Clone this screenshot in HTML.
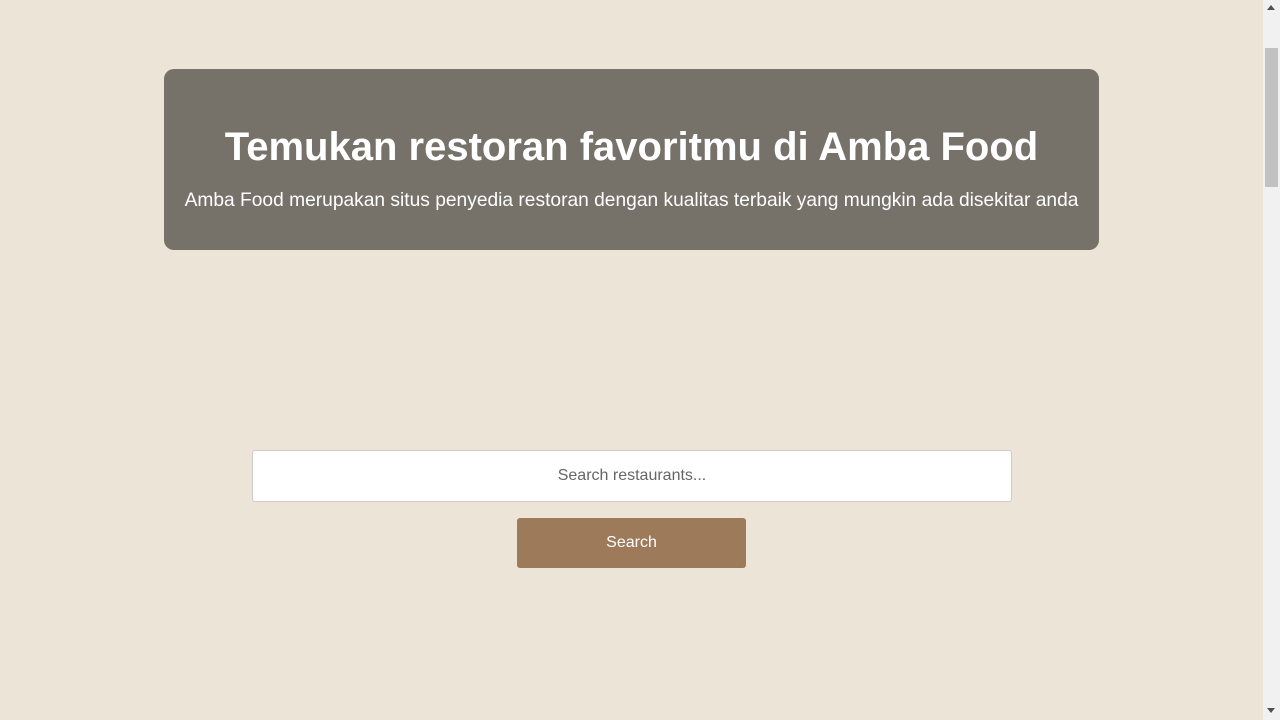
<!DOCTYPE html>
<html><head><style>
html,body{margin:0;padding:0;}
body{width:1280px;height:720px;background:#ece4d6;font-family:"Liberation Sans",Arial,sans-serif;position:relative;overflow:hidden;}
.hero{position:absolute;left:164px;top:69px;width:935px;height:181px;background:#767169;border-radius:10px;color:#fff;text-align:center;}
.hero h1{margin:0;position:absolute;top:55px;left:0;right:0;font-size:40px;font-weight:bold;line-height:46px;}
.hero p{margin:0;position:absolute;top:120px;left:0;right:0;font-size:19.2px;line-height:24px;}
.inp{position:absolute;left:252px;top:450px;width:758px;height:50px;background:#fff;border:1px solid #ccc;border-radius:3px;text-align:center;line-height:50px;font-size:16px;color:#666;}
.btn{position:absolute;left:517px;top:518px;width:229px;height:50px;background:#9c7a5a;border-radius:3px;color:#fff;text-align:center;line-height:50px;font-size:16px;}
.sb{position:absolute;left:1263px;top:0;width:17px;height:720px;background:#f1f1f1;}
.th{position:absolute;left:1265px;top:48px;width:13px;height:139px;background:#c1c1c1;}
.up{position:absolute;left:1267px;top:5px;width:0;height:0;border-left:4px solid transparent;border-right:4px solid transparent;border-bottom:5px solid #505050;}
.dn{position:absolute;left:1267px;top:708px;width:0;height:0;border-left:4px solid transparent;border-right:4px solid transparent;border-top:5px solid #505050;}
</style></head><body>
<div class="hero"><h1>Temukan restoran favoritmu di Amba Food</h1><p>Amba Food merupakan situs penyedia restoran dengan kualitas terbaik yang mungkin ada disekitar anda</p></div>
<div class="inp">Search restaurants...</div>
<div class="btn">Search</div>
<div class="sb"></div><div class="th"></div><div class="up"></div><div class="dn"></div>
</body></html>
